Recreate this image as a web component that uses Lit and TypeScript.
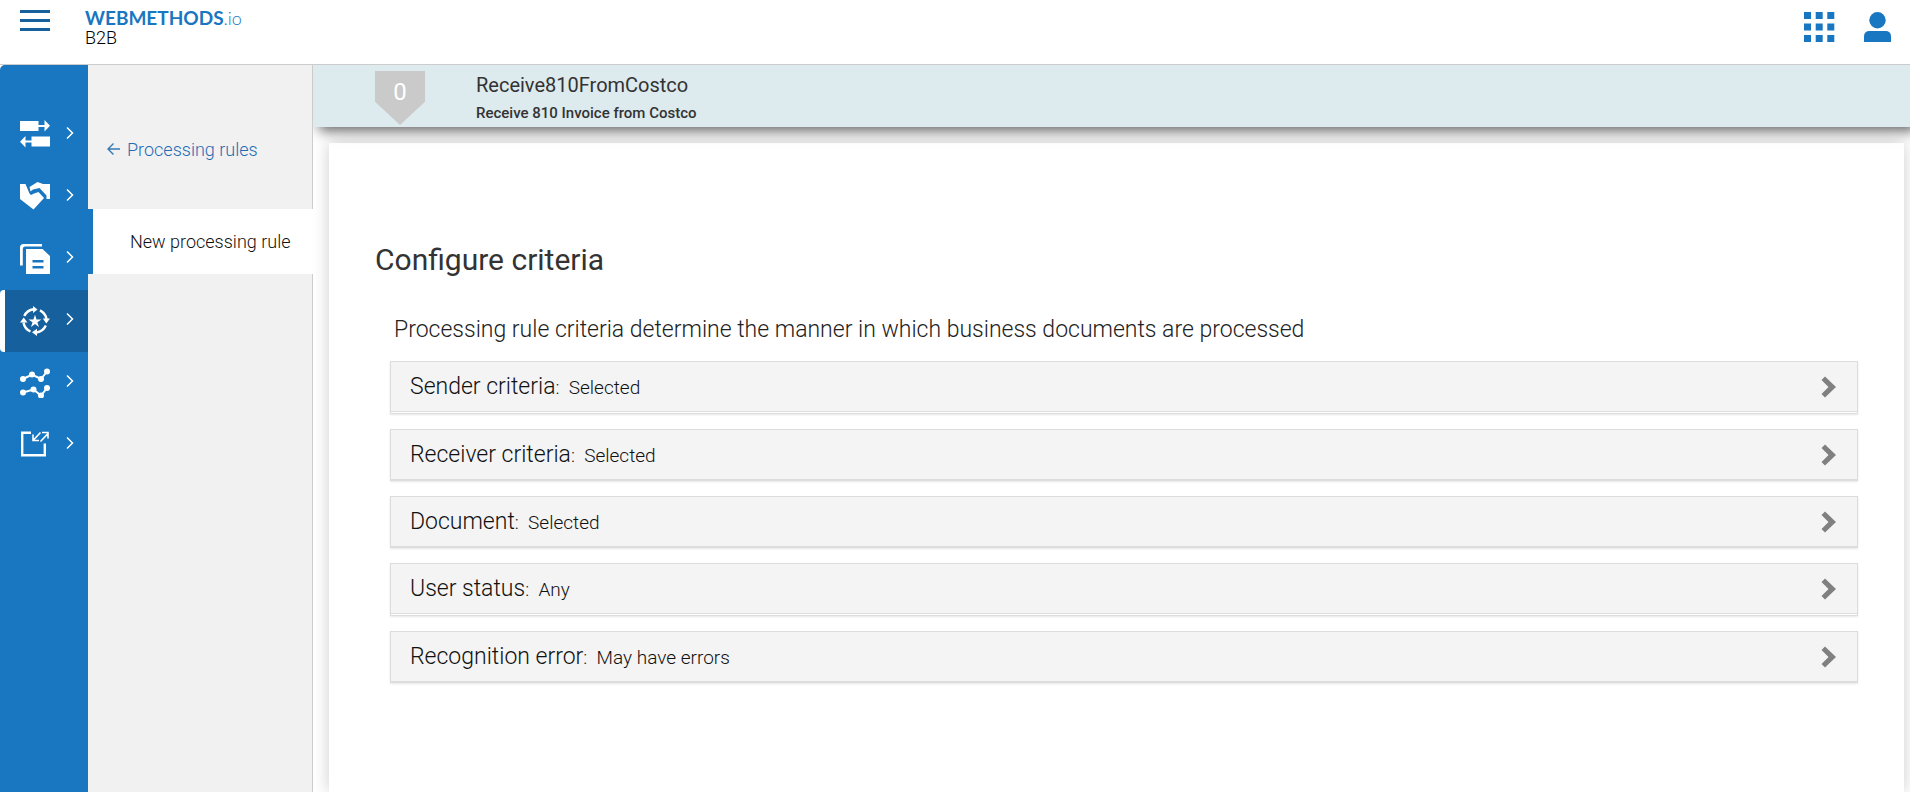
import { LitElement, html, css, svg } from "lit";
import { customElement, property } from "lit/decorators.js";
import { classMap } from "lit/directives/class-map.js";

const icons = {
  exchange: svg`<path d="M0 1h18.500v4h6V0L30 5.800l-5.500 5.700V7h-6v4H0z"/><path d="M30 26.500H11.500v-4h-6v5L0 21.700l5.500-5.700v4.500h6v-4H30z"/>`,
  partners: svg`<path d="M0 2h5.500L9.500 11.500l1.500 1.500 3-1.500 4.500-1.500 5.500 6L13.500 27.500 0 17z"/><path d="M9.500 5 17.500 0 23 2h7v15h-3.500V13.500L19.500 6 13 7.500 10.500 9.500z"/>`,
  documents: svg`<path d="M0 21.500V3.500Q0 0 3.500 0H22v2.500H5Q2.800 2.500 2.800 5v16.500z"/><path fill-rule="evenodd" d="M6 5h16.500L30 12V30H6zm6.500 11v2.500h11V16zm0 6v2.500h11V22z"/>`,
  rules: svg`<g fill="none" stroke="#fff" stroke-width="2.400"><path d="M4.300 10A12 12 0 0 1 13.500 3.300"/><path d="M20 4.300A12 12 0 0 1 26.500 13"/><path d="M25.800 19.500A12 12 0 0 1 16.500 26.500"/><path d="M10.500 25.500A12 12 0 0 1 3.500 16.500"/></g><path d="M13 0l4.500 3.500L13 7zM22.800 12.500h7.200L26.300 17.500zM17 22.700v7.300l-5-3.700zM0 16.500l3.700-5 3.800 5z"/><path d="M15 8.800l1.500 4.600h4.900l-4 2.900 1.500 4.700-3.900-2.900L11 21l1.500-4.700-4-2.900h4.900z"/>`,
  monitoring: svg`<g fill="none" stroke="#fff" stroke-width="2"><path d="M3 11 12 6.500l9 4.500L27 3.500M3 24.500l10.500-3L21 27.500l6-7.500"/></g><circle cx="3" cy="11" r="3"/><circle cx="12" cy="6.500" r="3"/><circle cx="21" cy="11" r="3"/><circle cx="27" cy="3.500" r="3"/><circle cx="3" cy="24.500" r="3"/><circle cx="13.500" cy="21.500" r="3"/><circle cx="21" cy="27.500" r="3"/><circle cx="27" cy="20" r="3"/>`,
  share: svg`<path fill="none" stroke="#fff" stroke-width="2.400" d="M11 2.700H2.200v22.600h22.600V13.500"/><path fill="none" stroke="#fff" stroke-width="1.600" d="M20.500 2.500 13.500 10M13 4.500v6h6M20.500 11.500l7.500-8M22 2.500h6v6"/>`,
};

type IconName = keyof typeof icons;

@customElement("nav-rail")
class NavRail extends LitElement {
  @property() active: IconName = "rules";

  static styles = css`
    :host {
      display: block;
      width: 88px;
      flex: none;
      background: #1976c0;
      border-top-left-radius: 5px;
    }
    .list {
      list-style: none;
      margin: 0;
      padding: 39px 0 0;
    }
    .link {
      display: flex;
      align-items: center;
      box-sizing: border-box;
      height: 62px;
      padding-left: 15px;
      border-left: 5px solid transparent;
    }
    .link.active {
      background: #15609d;
      border-left-color: #fff;
      border-radius: 4px 0 0 4px;
    }
    .icon {
      width: 30px;
      height: 30px;
      fill: #fff;
      flex: none;
    }
    .chevron {
      width: 8px;
      height: 14px;
      margin: 0 0 4px 16px;
      fill: none;
      stroke: #fff;
      stroke-width: 1.5;
    }
  `;

  private items: { icon: IconName; label: string }[] = [
    { icon: "exchange", label: "Transactions" },
    { icon: "partners", label: "Partners" },
    { icon: "documents", label: "Documents" },
    { icon: "rules", label: "Processing rules" },
    { icon: "monitoring", label: "Monitoring" },
    { icon: "share", label: "Share" },
  ];

  render() {
    return html`<nav aria-label="Main">
      <ul class="list">
        ${this.items.map(
          (item) => html`<li>
            <a
              href="#"
              class=${classMap({ link: true, active: item.icon === this.active })}
              aria-label=${item.label}
            >
              <svg class="icon" viewBox="0 0 30 30">${icons[item.icon]}</svg>
              <svg class="chevron" viewBox="0 0 8 14"><path d="M1 1.500 6.500 7 1 12.500" /></svg>
            </a>
          </li>`
        )}
      </ul>
    </nav>`;
  }
}

@customElement("criteria-row")
class CriteriaRow extends LitElement {
  @property() label = "";
  @property() value = "";

  static styles = css`
    :host {
      display: block;
      border: 1px solid #ddd;
      box-shadow: 0 1px 2px rgba(0, 0, 0, 0.1);
    }
    .row {
      display: flex;
      align-items: center;
      width: 100%;
      height: 50px;
      margin: 0;
      padding: 0 21px 0 19px;
      border: 0;
      border-bottom: 1px solid #ddd;
      background: #f4f4f4;
      color: #111;
      font: 300 19px/24px Roboto, sans-serif;
      text-align: left;
    }
    .text {
      flex: 1;
      padding-top: 1px;
      white-space: pre;
    }
    .label {
      font-size: 23px;
    }
    .arrow {
      width: 15px;
      height: 22px;
      fill: #808080;
    }
  `;

  render() {
    return html`<button class="row" type="button">
      <span class="text"><span class="label">${this.label}</span>:  ${this.value}</span>
      <svg class="arrow" viewBox="0 0 15 22">
        <path d="M4 .500 15 11 4 21.500 .500 18 7.500 11 .500 4z" />
      </svg>
    </button>`;
  }
}

@customElement("app-root")
class AppRoot extends LitElement {
  static styles = css`
    :host {
      display: flex;
      flex-direction: column;
      min-height: 100vh;
      background: #fff;
      color: #333;
      font-family: Roboto, sans-serif;
      font-weight: 300;
    }
    .header {
      display: flex;
      align-items: flex-start;
      box-sizing: border-box;
      height: 65px;
      padding: 9px 19px 0 20px;
      border-bottom: 1px solid #ccc;
    }
    .icon-button {
      display: block;
      margin: 0;
      padding: 0;
      border: 0;
      background: none;
    }
    .icon-button svg {
      display: block;
      fill: #1976c0;
    }
    .brand {
      flex: 1;
      margin-left: 35px;
      color: #1976c0;
      font-size: 18px;
      line-height: 22px;
    }
    .logo {
      font-family: Lato, sans-serif;
      font-size: 19px;
      font-weight: 700;
      line-height: 17px;
    }
    .logo-suffix {
      font-size: 18px;
      font-weight: 300;
    }
    .product {
      color: #000;
      font-weight: 300;
    }
    .tools {
      display: flex;
      gap: 28px;
    }
    .body {
      display: flex;
      flex: 1;
    }
    .side {
      flex: none;
      box-sizing: border-box;
      width: 225px;
      background: linear-gradient(#ccc, #ccc) right / 1px 100% no-repeat #f1f1f1;
      font-size: 18px;
      line-height: 24px;
    }
    .back {
      display: flex;
      align-items: center;
      gap: 7px;
      padding: 73px 0 47px 19px;
      color: #1f6cb4;
      text-decoration: none;
    }
    .back svg {
      width: 13px;
      height: 12px;
      margin-bottom: 2px;
      fill: none;
      stroke: #337ab7;
      stroke-width: 1.4;
    }
    .current {
      display: block;
      padding: 21px 0 20px 37px;
      border-left: 5px solid #1976c0;
      background: #fff;
      color: #111;
      text-decoration: none;
    }
    .main {
      display: flex;
      flex: 1;
      flex-direction: column;
      min-width: 0;
      overflow: hidden;
    }
    .banner {
      display: flex;
      z-index: 1;
      box-sizing: border-box;
      height: 62px;
      padding-left: 62px;
      background: #ddeaee;
      box-shadow: 6px 4px 12px rgba(0, 0, 0, 0.6);
    }
    .badge {
      box-sizing: border-box;
      width: 50px;
      height: 54px;
      margin-top: 6px;
      padding-top: 7px;
      background: #cacaca;
      clip-path: polygon(0 0, 100% 0, 100% 57%, 50% 100%, 0 57%);
      color: #fff;
      font-size: 24px;
      font-weight: 400;
      line-height: 28px;
      text-align: center;
    }
    .rule {
      margin-left: 51px;
      padding-top: 7px;
    }
    .rule-name {
      margin: 0;
      font-size: 20px;
      font-weight: 400;
      line-height: 26px;
    }
    .rule-description {
      margin: 0;
      padding-top: 5px;
      font-size: 15px;
      font-weight: 500;
      line-height: 20px;
    }
    .card {
      flex: 1;
      margin: 16px 6px 0 16px;
      padding: 97px 46px 0 46px;
      background: #fff;
      box-shadow: 0 0 16px rgba(0, 0, 0, 0.2);
    }
    .title {
      margin: 0;
      font-size: 30px;
      font-weight: 400;
      line-height: 40px;
    }
    .criteria {
      padding-left: 15px;
    }
    .intro {
      margin: 34px 0 15px 4px;
      color: #222;
      font-size: 23px;
      line-height: 32px;
    }
    .rows {
      display: grid;
      gap: 15px;
    }
    .rows criteria-row:nth-child(3n + 1) {
      padding-bottom: 1px;
    }
  `;

  private criteria = [
    { label: "Sender criteria", value: "Selected" },
    { label: "Receiver criteria", value: "Selected" },
    { label: "Document", value: "Selected" },
    { label: "User status", value: "Any" },
    { label: "Recognition error", value: "May have errors" },
  ];

  render() {
    return html`
      <header class="header">
        <button class="icon-button" type="button" aria-label="Menu">
          <svg width="30" height="22" viewBox="0 0 30 22">
            <path fill="#15609d" d="M0 1h30v3H0zM0 10h30v3H0zM0 19h30v3H0z" />
          </svg>
        </button>
        <div class="brand">
          <div class="logo">WEBMETHODS<span class="logo-suffix">.io</span></div>
          <div class="product">B2B</div>
        </div>
        <div class="tools">
          <button class="icon-button" type="button" aria-label="Applications">
            <svg width="32" height="34" viewBox="0 0 32 34">
              <path
                d="M0 3h7v7H0zM11.700 3h7v7h-7zM23.300 3h7v7h-7zM0 14.500h7v7H0zM11.700 14.500h7v7h-7zM23.300 14.500h7v7h-7zM0 26h7v7H0zM11.700 26h7v7h-7zM23.300 26h7v7h-7z"
              />
            </svg>
          </button>
          <button class="icon-button" type="button" aria-label="Account">
            <svg width="27" height="31" viewBox="0 0 27 31">
              <circle cx="13.500" cy="9.300" r="8.200" />
              <path d="M0 31v-5.500q0-5.500 5.500-5.500h16q5.500 0 5.500 5.500V31z" />
            </svg>
          </button>
        </div>
      </header>
      <div class="body">
        <nav-rail active="rules"></nav-rail>
        <nav class="side" aria-label="Section">
          <a class="back" href="#">
            <svg viewBox="0 0 13 12"><path d="M6.500 .500 1 6l5.500 5.500M1 6h12" /></svg>
            Processing rules
          </a>
          <a class="current" href="#">New processing rule</a>
        </nav>
        <main class="main">
          <div class="banner">
            <div class="badge">0</div>
            <div class="rule">
              <h1 class="rule-name">Receive810FromCostco</h1>
              <p class="rule-description">Receive 810 Invoice from Costco</p>
            </div>
          </div>
          <section class="card">
            <h2 class="title">Configure criteria</h2>
            <div class="criteria">
              <p class="intro">
                Processing rule criteria determine the manner in which business documents are
                processed
              </p>
              <div class="rows">
                ${this.criteria.map(
                  (c) => html`<criteria-row label=${c.label} value=${c.value}></criteria-row>`
                )}
              </div>
            </div>
          </section>
        </main>
      </div>
    `;
  }
}
